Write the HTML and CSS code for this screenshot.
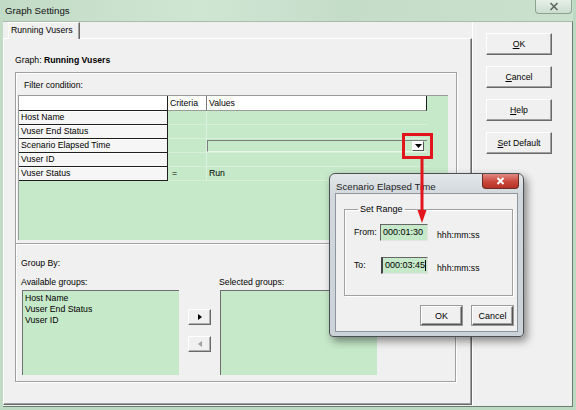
FILE: index.html
```html
<!DOCTYPE html>
<html>
<head>
<meta charset="utf-8">
<title>Graph Settings</title>
<link rel="stylesheet" href="styles.css">
</head>
<body>
<div class="window">
  <div class="titlebar">
    <span class="title">Graph Settings</span>
    <div class="wclose"><svg width="10" height="9" viewBox="0 0 10 9"><path d="M1.5 1 L8.5 8 M8.5 1 L1.5 8" stroke="#5a665e" stroke-width="1.6" fill="none"/></svg></div>
  </div>
  <div class="client">
    <div class="tabs">
      <div class="tabstrip"><div class="tab">Running Vusers</div></div>
      <div class="panel">
        <div class="graph-line">Graph: <b>Running Vusers</b></div>
        <div class="frame filter">
          <div class="flabel">Filter condition:</div>
          <div class="gridctl">
            <div class="grid">
              <div class="gh corner"></div><div class="gh">Criteria</div><div class="gh last">Values</div>
              <div class="rh">Host Name</div><div class="cc"></div><div class="vc"></div>
              <div class="rh">Vuser End Status</div><div class="cc"></div><div class="vc"></div>
              <div class="rh">Scenario Elapsed Time</div><div class="cc"></div><div class="vc"><div class="combo"><span class="drop"><svg width="7" height="4" viewBox="0 0 7 4"><path d="M0 0 H7 L3.5 4 Z" fill="#000"/></svg></span></div></div>
              <div class="rh">Vuser ID</div><div class="cc"></div><div class="vc"></div>
              <div class="rh">Vuser Status</div><div class="cc">=</div><div class="vc">Run</div>
            </div>
          </div>
        </div>
        <div class="frame groupby">
          <div class="glabel">Group By:</div>
          <div class="groups">
            <div class="gcol">
              <div class="lbl">Available groups:</div>
              <div class="listbox">
                <div>Host Name</div>
                <div>Vuser End Status</div>
                <div>Vuser ID</div>
              </div>
            </div>
            <div class="movebtns">
              <div class="mbtn"><svg width="4" height="6" viewBox="0 0 4 6"><path d="M0 0 L4 3 L0 6 Z" fill="#000"/></svg></div>
              <div class="mbtn"><svg width="4" height="6" viewBox="0 0 4 6"><path d="M4 0 L0 3 L4 6 Z" fill="#a0a0a0"/></svg></div>
            </div>
            <div class="gcol sel">
              <div class="lbl">Selected groups:</div>
              <div class="listbox"></div>
            </div>
          </div>
        </div>
      </div>
    </div>
    <div class="side">
      <div class="btn"><u>O</u>K</div>
      <div class="btn"><u>C</u>ancel</div>
      <div class="btn"><u>H</u>elp</div>
      <div class="btn"><u>S</u>et Default</div>
    </div>
  </div>
</div>

<div class="sub">
  <div class="sub-title">
    <span class="sub-caption">Scenario Elapsed Time</span>
    <div class="sclose"><svg width="9" height="8" viewBox="0 0 9 8"><path d="M1.5 1 L7.5 7 M7.5 1 L1.5 7" stroke="#fff" stroke-width="2" fill="none"/></svg></div>
  </div>
  <div class="sub-client">
    <fieldset class="range">
      <legend>Set Range</legend>
      <div class="rgrid">
        <span>From:</span><div class="edit">000:01:30</div><span class="hint">hhh:mm:ss</span>
        <span>To:</span><div class="edit focus">000:03:45<i class="caret"></i></div><span class="hint">hhh:mm:ss</span>
      </div>
    </fieldset>
    <div class="sbtns">
      <div class="sbtn">OK</div>
      <div class="sbtn">Cancel</div>
    </div>
  </div>
</div>

<div class="highlight"></div>
<svg class="arrow" width="12" height="68" viewBox="0 0 12 68"><path d="M6 0 V56" stroke="#e3151c" stroke-width="3" fill="none"/><path d="M1.5 53 H10.5 L6 66 Z" fill="#e3151c"/></svg>
</body>
</html>
```
FILE: styles.css
```css
* { box-sizing: border-box; }
html, body { margin: 0; padding: 0; }
body {
  width: 576px;
  height: 410px;
  overflow: hidden;
  position: relative;
  background: #bcd9c2;
  font-family: "Liberation Sans", Arial, sans-serif;
  font-size: 8.7px;
  color: #000;
}

.window {
  width: 573px;
  height: 407px;
  display: flex;
  flex-direction: column;
  background: linear-gradient(90deg, #c1dbc6 0%, #cfe6d3 35%, #c4ddc9 60%, #c9e1cd 100%);
}
.titlebar {
  height: 21px;
  display: flex;
  align-items: center;
  justify-content: space-between;
  padding-left: 5px;
  padding-right: 1px;
}
.title { font-size: 9.7px; color: #111; }
.wclose {
  align-self: flex-start;
  width: 37px;
  height: 14px;
  border: 1px solid #8ea293;
  border-top: none;
  border-radius: 0 0 4px 4px;
  background: linear-gradient(#e6f0e8, #cbddcf);
  display: flex;
  align-items: center;
  justify-content: center;
}

.client {
  flex: 1;
  margin-left: 3px;
  background: #f0f0f0;
  display: flex;
  border-top: 1px solid #a8bcad;
  border-right: 1px solid #6d7c71;
  border-bottom: 1px solid #6d7c71;
}
.tabs {
  width: 469px;
  display: flex;
  flex-direction: column;
}
.tabstrip {
  height: 16px;
  display: flex;
  padding-left: 5px;
}
.tab {
  position: relative;
  z-index: 2;
  width: 72px;
  height: 17px;
  background: #f0f0f0;
  border-top: 1px solid #fff;
  border-left: 1px solid #fff;
  border-right: 1px solid #696969;
  box-shadow: inset -1px 0 0 #a0a0a0;
  padding-left: 2px;
  line-height: 15px;
}
.panel {
  position: relative;
  z-index: 1;
  height: 367px;
  border-top: 1px solid #fff;
  border-left: 1px solid #fff;
  border-right: 1px solid #696969;
  border-bottom: 1px solid #696969;
  box-shadow: inset -1px -1px 0 #a0a0a0;
  padding-left: 11px;
  padding-top: 16px;
}
.graph-line { height: 11px; line-height: 11px; }

.frame {
  width: 442px;
  border: 1px solid #a0a0a0;
  box-shadow: inset 1px 1px 0 #fff, 1px 1px 0 #fff;
}
.filter {
  margin-top: 6px;
  height: 172px;
  padding: 7px 0 0 2px;
}
.flabel { height: 11px; line-height: 11px; margin-left: 6px; margin-bottom: 4px; }
.gridctl {
  width: 430px;
  height: 145px;
  background: #c6e9c9;
  border-top: 1px solid #9a9a9a;
  border-left: 1px solid #9a9a9a;
}
.grid {
  display: grid;
  grid-template-columns: 149px 39px 220px;
  grid-template-rows: 15px repeat(5, 14px);
}
.gh {
  background: #fff;
  border-right: 1px solid #7a7a7a;
  border-bottom: 1px solid #9a9a9a;
  padding-left: 2px;
  line-height: 14px;
}
.gh.corner { border-right: 1px solid #1e1e1e; border-bottom: 1px solid #1e1e1e; }
.gh.last { border-right: 1px solid #1e1e1e; }
.rh {
  background: #f6f6f6;
  border-right: 1px solid #1e1e1e;
  border-bottom: 1px solid #1e1e1e;
  box-shadow: inset 0 1px 0 #fff;
  padding-left: 2px;
  line-height: 13px;
  white-space: nowrap;
}
.cc {
  border-right: 1px solid #dcf2de;
  border-bottom: 1px solid #d8efda;
  padding-left: 4px;
  line-height: 13px;
}
.vc {
  border-bottom: 1px solid #d8efda;
  padding-left: 2px;
  line-height: 13px;
}
.vc:has(.combo) { padding-left: 0; }
.combo {
  margin-top: 1px;
  height: 12px;
  border-top: 1px solid #7c7c7c;
  border-left: 1px solid #7c7c7c;
  border-bottom: 1px solid #e8f6e9;
  display: flex;
  justify-content: flex-end;
  align-items: center;
}
.drop {
  width: 12px;
  height: 10px;
  margin-right: 3px;
  background: #fafafa;
  border-top: 1px solid #fff;
  border-left: 1px solid #fff;
  border-right: 1px solid #555;
  border-bottom: 1px solid #555;
  display: flex;
  align-items: center;
  justify-content: center;
}

.groupby {
  width: 441px;
  height: 138px;
  border-top: none;
  padding: 14px 0 0 5px;
}
.glabel { height: 11px; line-height: 11px; }
.groups {
  display: flex;
  align-items: flex-start;
  margin-top: 8px;
}
.gcol { width: 158px; }
.lbl { height: 11px; line-height: 11px; }
.listbox {
  margin-top: 2px;
  margin-left: 1px;
  width: 157px;
  height: 85px;
  background: #c6e9c9;
  border-top: 1px solid #6f6f6f;
  border-left: 1px solid #6f6f6f;
  padding: 2px 0 0 2px;
  line-height: 11px;
}
.movebtns {
  margin-left: 9px;
  margin-top: 32px;
  display: flex;
  flex-direction: column;
  gap: 11px;
}
.mbtn {
  width: 23px;
  height: 16px;
  background: #f0f0f0;
  border-top: 1px solid #fff;
  border-left: 1px solid #fff;
  border-right: 1px solid #696969;
  border-bottom: 1px solid #696969;
  box-shadow: inset -1px -1px 0 #b0b0b0;
  display: flex;
  align-items: center;
  justify-content: center;
}
.gcol.sel { margin-left: 8px; }

.side {
  flex: 1;
  border-left: 1px solid #fff;
  padding: 11px 0 0 13px;
  display: flex;
  flex-direction: column;
  gap: 11px;
}
.btn {
  width: 66px;
  height: 22px;
  background: #f0f0f0;
  border-top: 1px solid #fff;
  border-left: 1px solid #fff;
  border-right: 1px solid #696969;
  border-bottom: 1px solid #696969;
  box-shadow: inset -1px -1px 0 #a0a0a0;
  display: flex;
  align-items: center;
  justify-content: center;
}

/* overlay dialog */
.sub {
  position: absolute;
  z-index: 10;
  left: 329px;
  top: 173px;
  width: 195px;
  height: 164px;
  border: 1px solid #4b5054;
  border-radius: 6px 6px 4px 4px;
  background: linear-gradient(#e3e7ea, #d2d8dc 20px, #ccd3d8);
  box-shadow: 3px 4px 8px rgba(0, 0, 0, 0.45);
  padding: 0 5px 4px 5px;
  display: flex;
  flex-direction: column;
}
.sub-title {
  height: 19px;
  display: flex;
  justify-content: space-between;
  padding-left: 1px;
}
.sub-caption { font-size: 9.7px; color: #222; margin-top: 7px; }
.sclose {
  width: 37px;
  height: 15px;
  margin-right: -1px;
  border: 1px solid #6b2a24;
  border-top: none;
  border-radius: 0 0 4px 4px;
  background: linear-gradient(#e08a80, #c9473b 55%, #b53226);
  display: flex;
  align-items: center;
  justify-content: center;
}
.sub-client {
  flex: 1;
  background: #f0f0f0;
  border: 1px solid #8d969c;
  padding: 10px 4px 0 8px;
}
.range {
  margin: 0;
  width: 169px;
  height: 92px;
  border: 1px solid #a0a0a0;
  box-shadow: inset 1px 1px 0 #fff, 1px 1px 0 #fff;
  padding: 9px 0 0 9px;
}
.range legend {
  margin-left: 4px;
  padding: 0 2px;
  line-height: 11px;
  font-size: 9px;
}
.rgrid {
  display: grid;
  grid-template-columns: 22px 48px auto;
  grid-template-rows: 17px 17px;
  row-gap: 16px;
  column-gap: 4px;
  align-items: center;
}
.rgrid span { line-height: 11px; }
.hint { margin-top: 5px; margin-left: 5px; }
.edit {
  height: 17px;
  background: #c6e9c9;
  border-top: 1px solid #666;
  border-left: 1px solid #666;
  border-right: 1px solid #e4e4e4;
  border-bottom: 1px solid #e4e4e4;
  padding-left: 2px;
  line-height: 15px;
  font-size: 9px;
  display: flex;
  align-items: center;
}
.edit.focus { border-left: 2px solid #444; margin-left: 1px; margin-top: -1px; }
.caret {
  display: inline-block;
  width: 1px;
  height: 11px;
  background: #000;
}
.sbtns {
  margin-top: 10px;
  display: flex;
  justify-content: flex-end;
  gap: 10px;
}
.sbtn {
  width: 41px;
  height: 19px;
  background: #f0f0f0;
  border-top: 1px solid #fff;
  border-left: 1px solid #fff;
  border-right: 1px solid #555;
  border-bottom: 1px solid #555;
  box-shadow: inset -1px -1px 0 #a0a0a0, 0 0 0 1px #9a9a9a;
  display: flex;
  align-items: center;
  justify-content: center;
  font-size: 9px;
}

.highlight {
  position: absolute;
  z-index: 11;
  left: 402px;
  top: 133px;
  width: 31px;
  height: 26px;
  border: 3px solid #e3151c;
}
.arrow {
  position: absolute;
  z-index: 12;
  left: 416px;
  top: 157px;
}
```
